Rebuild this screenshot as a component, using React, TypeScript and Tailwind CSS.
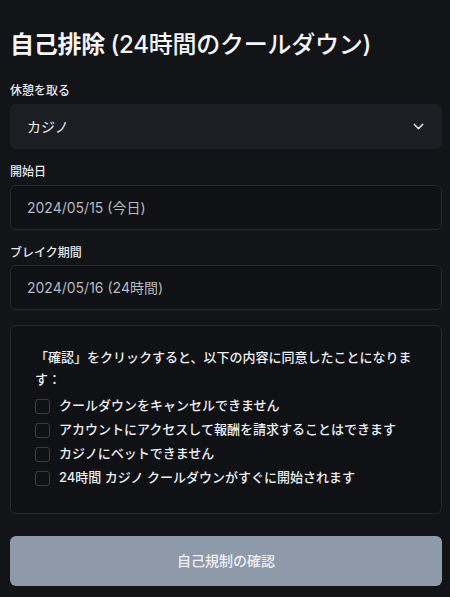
import { ChevronDown } from "lucide-react";

const terms = [
  "クールダウンをキャンセルできません",
  "アカウントにアクセスして報酬を請求することはできます",
  "カジノにベットできません",
  "24時間 カジノ クールダウンがすぐに開始されます",
];

export default function App() {
  return (
    <div
      className="min-h-[597px] w-[450px] bg-[#131418] pt-[29px] pr-[8px] pb-4 pl-[10px] text-white"
      style={{ fontFamily: '"Inter", "Noto Sans CJK JP", sans-serif' }}
    >
      <h1 className="text-[24px] leading-8 font-bold tracking-[-0.01em] text-[#f4f5f7]">
        自己排除 <span className="font-medium">(24時間のクールダウン)</span>
      </h1>

      <label className="mt-[22px] mb-[5px] block text-xs leading-4 font-medium text-[#e4e6ea]">
        休憩を取る
      </label>
      <button className="flex h-[45px] w-full items-center justify-between rounded-md bg-[#1c1e23] pr-[15px] pl-[17px] text-sm text-[#eceef1]">
        <span>カジノ</span>
        <ChevronDown size={17} strokeWidth={2} className="text-[#d7dae0]" />
      </button>

      <label className="mt-[15px] mb-[5px] block text-xs leading-4 font-medium text-[#e4e6ea]">
        開始日
      </label>
      <div className="flex h-[45px] items-center rounded-md border border-[#25272c] bg-[#101115] pl-[16px] text-sm text-[#b5b9c1]">
        2024/05/15 (今日)
      </div>

      <label className="mt-[15px] mb-[4px] block text-xs leading-4 font-medium text-[#e4e6ea]">
        ブレイク期間
      </label>
      <div className="flex h-[45px] items-center rounded-md border border-[#25272c] bg-[#101115] pl-[16px] text-sm text-[#b5b9c1]">
        2024/05/16 (24時間)
      </div>

      <div className="mt-[15px] rounded-md border border-[#25272c] bg-[#101115] px-6 pt-[20px] pb-[23px]">
        <p className="text-[13px] leading-[22px] font-medium text-[#eceef1]">
          「確認」をクリックすると、以下の内容に同意したことになります：
        </p>
        <ul className="mt-[4px] flex flex-col">
          {terms.map((t) => (
            <li key={t} className="flex h-6 items-center gap-[9px]">
              <span className="h-[15px] w-[15px] shrink-0 rounded-[3px] border border-[#3a3d44]" />
              <span className="text-[13px] font-medium text-[#eceef1]">{t}</span>
            </li>
          ))}
        </ul>
      </div>

      <button className="mt-[22px] flex h-[50px] w-full items-center justify-center rounded-md bg-[#8e99a9] text-sm font-medium text-[#eef0f3]">
        自己規制の確認
      </button>
    </div>
  );
}
